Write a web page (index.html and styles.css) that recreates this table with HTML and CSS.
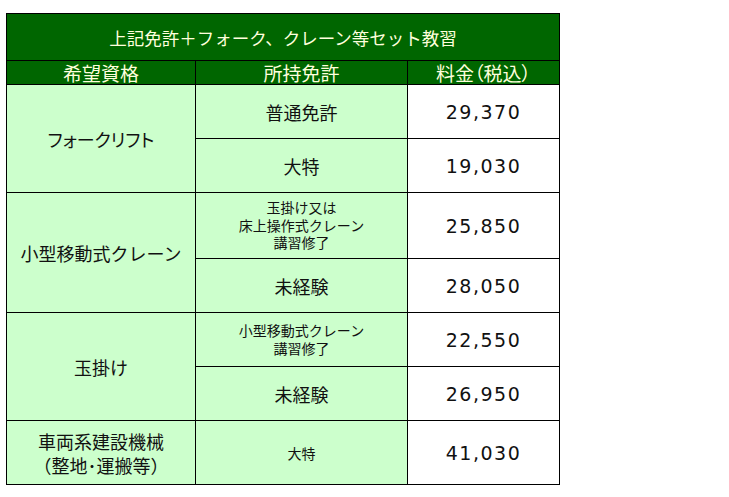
FILE: index.html
```html
<!DOCTYPE html>
<html lang="ja">
<head>
<meta charset="utf-8">
<link rel="stylesheet" href="styles.css">
</head>
<body>
<table class="fee">
  <colgroup>
    <col class="c1"><col class="c2"><col class="c3">
  </colgroup>
  <tr class="r-title"><th colspan="3" class="title">上記免許＋フォーク、クレーン等セット教習</th></tr>
  <tr class="r-head"><th>希望資格</th><th>所持免許</th><th class="kana">料金（税込）</th></tr>
  <tr class="r54"><td rowspan="2" class="qual kana">フォークリフト</td><td class="lic">普通免許</td><td class="price">29,370</td></tr>
  <tr class="r54"><td class="lic">大特</td><td class="price">19,030</td></tr>
  <tr class="r66"><td rowspan="2" class="qual">小型移動式クレーン</td><td class="lic small"><span class="ln">玉掛け又は</span><span class="ln">床上操作式クレーン</span><span class="ln">講習修了</span></td><td class="price">25,850</td></tr>
  <tr class="r54"><td class="lic">未経験</td><td class="price">28,050</td></tr>
  <tr class="r54"><td rowspan="2" class="qual">玉掛け</td><td class="lic small"><span class="ln">小型移動式クレーン</span><span class="ln">講習修了</span></td><td class="price">22,550</td></tr>
  <tr class="r54"><td class="lic">未経験</td><td class="price">26,950</td></tr>
  <tr class="r64"><td class="qual two"><span class="ln2">車両系建設機械</span><span class="ln2">（整地･運搬等）</span></td><td class="lic small">大特</td><td class="price">41,030</td></tr>
</table>
</body>
</html>
```
FILE: styles.css
```css
html, body {
  margin: 0;
  background: #ffffff;
}
body {
  padding: 13px 0 0 6px;
  font-family: "Noto Sans CJK JP", "Noto Sans", sans-serif;
  color: #111111;
}
.fee {
  border-collapse: collapse;
  width: 553px;
  table-layout: fixed;
}
.c1 { width: 189px; }
.c2 { width: 212px; }
.c3 { width: 152px; }
.fee th, .fee td {
  border: 1px solid #000000;
  padding: 0;
  text-align: center;
  vertical-align: middle;
}
.fee th {
  background: #006600;
  color: #ffffdd;
  font-weight: normal;
}
.title {
  font-size: 17.5px;
}
.r-title { height: 47px; }
.r-head { height: 24px; }
.r-head th {
  font-size: 19px;
  line-height: 22px;
}
.r54 { height: 54px; }
.r66 { height: 66px; }
.r64 { height: 64px; }
.qual, .lic {
  background: #ccffcc;
  font-size: 18px;
}
.kana {
  font-feature-settings: "palt";
}
.ln2 {
  display: block;
  line-height: 24px;
}
.small {
  font-size: 14px;
}
.ln {
  display: block;
  line-height: 17.5px;
}
.price {
  background: #ffffff;
  font-family: "DejaVu Sans", Verdana, sans-serif;
  font-size: 19px;
  letter-spacing: 1.5px;
}
```
